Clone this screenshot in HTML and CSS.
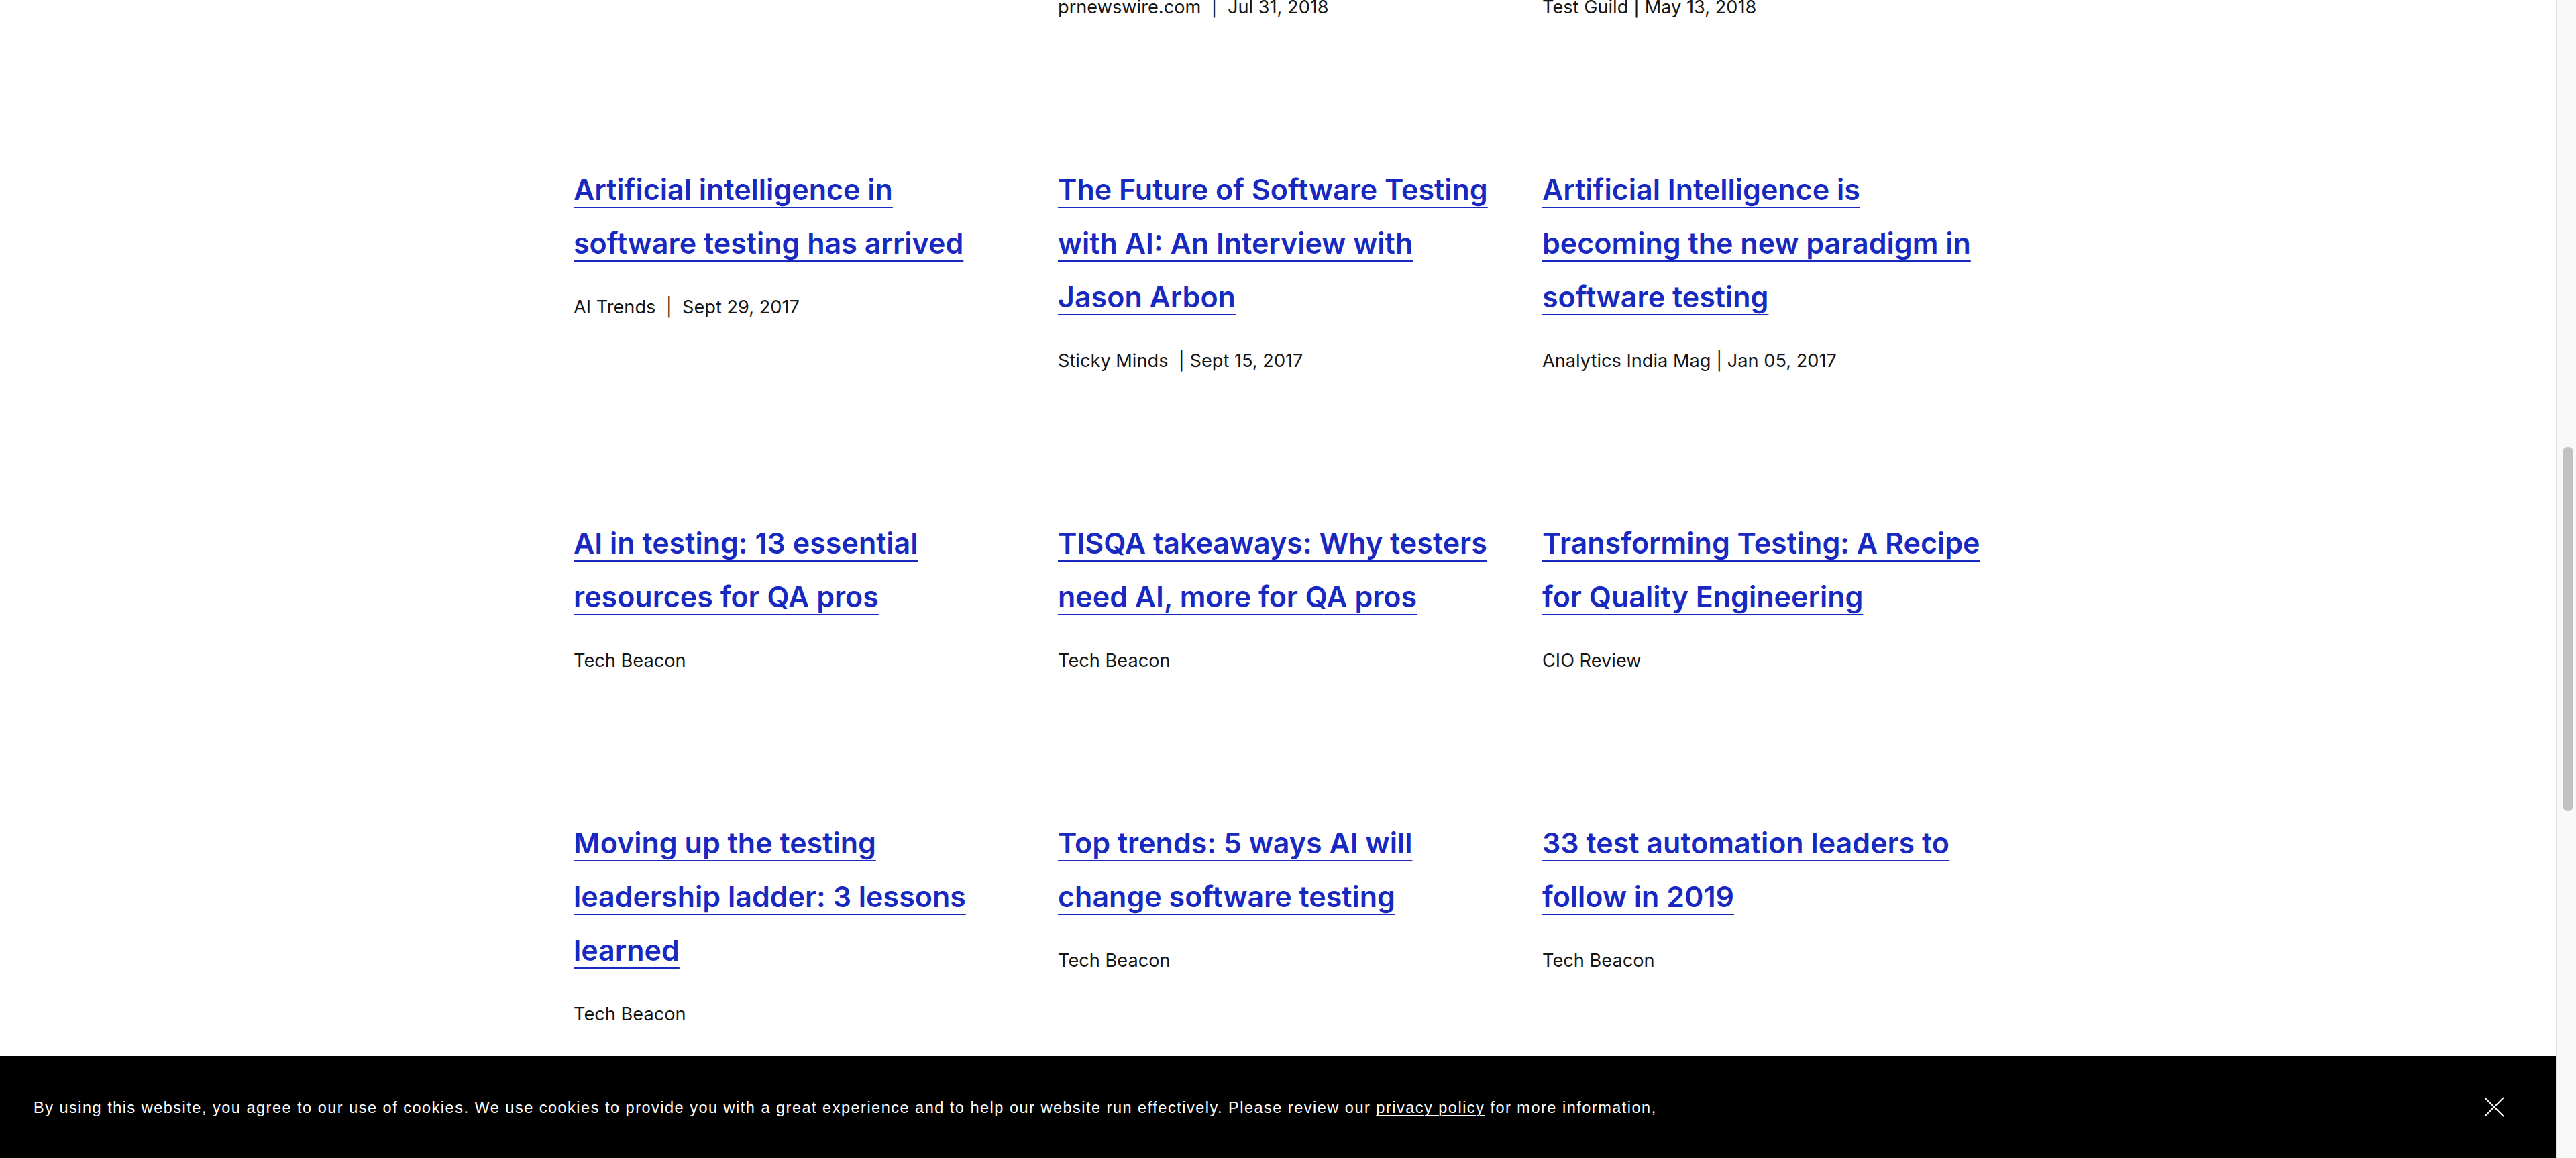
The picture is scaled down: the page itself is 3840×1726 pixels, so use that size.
FILE: index.html
```html
<!DOCTYPE html>
<html lang="en">
<head>
<meta charset="utf-8">
<title>AI in testing – In the news</title>
<link rel="stylesheet" href="styles.css">
</head>
<body>
<div class="page">
  <main class="main">
    <section class="news">
      <article class="card card--tail"></article>
      <article class="card card--tail"><p class="meta">prnewswire.com &nbsp;|&nbsp; Jul 31, 2018</p></article>
      <article class="card card--tail"><p class="meta">Test Guild | May 13, 2018</p></article>

      <article class="card">
        <h3 class="title"><a href="#">Artificial intelligence in software testing has arrived</a></h3>
        <p class="meta">AI Trends &nbsp;|&nbsp; Sept 29, 2017</p>
      </article>
      <article class="card">
        <h3 class="title"><a href="#">The Future of Software Testing with AI: An Interview with Jason Arbon</a></h3>
        <p class="meta">Sticky Minds &nbsp;| Sept 15, 2017</p>
      </article>
      <article class="card">
        <h3 class="title"><a href="#">Artificial Intelligence is becoming the new paradigm in software testing</a></h3>
        <p class="meta">Analytics India Mag | Jan 05, 2017</p>
      </article>

      <article class="card">
        <h3 class="title"><a href="#">AI in testing: 13 essential resources for QA pros</a></h3>
        <p class="meta">Tech Beacon</p>
      </article>
      <article class="card">
        <h3 class="title"><a href="#">TISQA takeaways: Why testers need AI, more for QA pros</a></h3>
        <p class="meta">Tech Beacon</p>
      </article>
      <article class="card">
        <h3 class="title"><a href="#">Transforming Testing: A Recipe for Quality Engineering</a></h3>
        <p class="meta">CIO Review</p>
      </article>

      <article class="card">
        <h3 class="title"><a href="#">Moving up the testing leadership ladder: 3 lessons learned</a></h3>
        <p class="meta">Tech Beacon</p>
      </article>
      <article class="card">
        <h3 class="title"><a href="#">Top trends: 5 ways AI will change software testing</a></h3>
        <p class="meta">Tech Beacon</p>
      </article>
      <article class="card">
        <h3 class="title"><a href="#">33 test automation leaders to follow in 2019</a></h3>
        <p class="meta">Tech Beacon</p>
      </article>
    </section>

    <div class="cookie">
      <p class="cookie__text">By using this website, you agree to our use of cookies. We use cookies to provide you with a great experience and to help our website run effectively. Please review our <a href="#">privacy policy</a> for more information,</p>
      <button class="cookie__close" aria-label="Close">
        <svg width="30" height="30" viewBox="0 0 30 30"><path d="M1 1 L29 29 M29 1 L1 29" stroke="#fff" stroke-width="2" fill="none"/></svg>
      </button>
    </div>
  </main>
  <div class="rail"><div class="rail__thumb"></div></div>
</div>
</body>
</html>
```

FILE: styles.css
```css
html, body {
  margin: 0;
  padding: 0;
  background: #fff;
}

.page {
  display: flex;
  height: 1726px;
  overflow: hidden;
}

.main {
  flex: 1;
  position: relative;
  overflow: hidden;
}

.news {
  display: grid;
  grid-template-columns: repeat(3, 656px);
  column-gap: 66px;
  row-gap: 211px;
  justify-content: center;
  margin-top: -9px;
}

.card {
  display: flex;
  flex-direction: column;
}

.title {
  margin: 0;
  font-family: "Inter", "Liberation Sans", sans-serif;
  font-weight: 600;
  font-size: 43px;
  line-height: 80px;
  letter-spacing: 0;
}

.title a {
  color: #1729bf;
  text-decoration: underline;
  text-decoration-thickness: 2px;
  text-underline-offset: 10px;
}

.meta {
  margin: 36px 0 0;
  font-family: "Inter", "Liberation Sans", sans-serif;
  font-weight: 400;
  font-size: 27.2px;
  line-height: 40px;
  color: #161616;
  white-space: nowrap;
}

.card--tail .meta {
  margin-top: 0;
}

.cookie {
  position: absolute;
  left: 0;
  right: 0;
  bottom: 0;
  height: 152px;
  background: #000;
  display: flex;
  align-items: center;
  justify-content: space-between;
  padding: 0 77px 0 50px;
  box-sizing: border-box;
}

.cookie__text {
  margin: 0;
  color: #fff;
  font-family: "Liberation Sans", Arial, sans-serif;
  font-size: 23.5px;
  letter-spacing: 1.5px;
  line-height: 30px;
  padding-top: 2px;
}

.cookie__text a {
  color: #fff;
  text-decoration: underline;
  text-decoration-thickness: 1px;
  text-underline-offset: 3px;
}

.cookie__close {
  background: none;
  border: 0;
  padding: 0;
  width: 30px;
  height: 30px;
  display: flex;
  cursor: pointer;
}

.rail {
  width: 30px;
  background: #f8f8f8;
  border-left: 2px solid #e6e6e6;
  box-sizing: border-box;
  display: flex;
  flex-direction: column;
  align-items: center;
  padding-top: 666px;
  padding-left: 4px;
}

.rail__thumb {
  width: 16px;
  height: 543px;
  border-radius: 8px;
  background: #c1c1c1;
}
```
